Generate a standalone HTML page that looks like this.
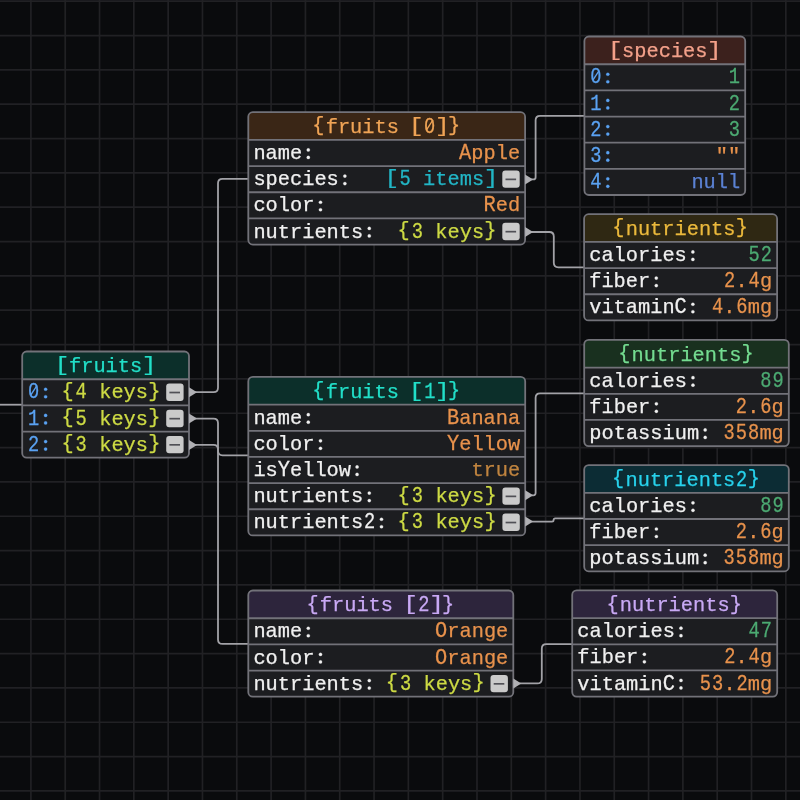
<!DOCTYPE html>
<html><head><meta charset="utf-8"><style>html,body{margin:0;padding:0;background:#0a0b0d;width:800px;height:800px;overflow:hidden}text{font-family:"Liberation Mono",monospace}</style></head>
<body><div style="will-change:transform"><svg width="800" height="800" viewBox="0 0 800 800" style="display:block"><rect width="800" height="800" fill="#0a0b0d"/><path d="M30.90 0V800M65.22 0V800M99.53 0V800M133.84 0V800M168.16 0V800M202.47 0V800M236.79 0V800M271.10 0V800M305.42 0V800M339.73 0V800M374.05 0V800M408.36 0V800M442.68 0V800M476.99 0V800M511.31 0V800M545.62 0V800M579.94 0V800M614.25 0V800M648.57 0V800M682.88 0V800M717.20 0V800M751.51 0V800M785.83 0V800M0 1.20H800M0 35.54H800M0 69.87H800M0 104.21H800M0 138.54H800M0 172.88H800M0 207.22H800M0 241.55H800M0 275.89H800M0 310.22H800M0 344.56H800M0 378.90H800M0 413.23H800M0 447.57H800M0 481.90H800M0 516.24H800M0 550.58H800M0 584.91H800M0 619.25H800M0 653.58H800M0 687.92H800M0 722.26H800M0 756.59H800M0 790.93H800" stroke="#212124" stroke-width="1.7" fill="none"/><path d="M-5 404.7H23" stroke="#a2a2a7" stroke-width="1.8" fill="none"/><path d="M195.00 392.20L213.50 392.20Q218.00 392.20 218.00 387.70L218.00 183.30Q218.00 178.80 222.50 178.80L248.30 178.80" stroke="#a2a2a7" stroke-width="1.8" fill="none"/><path d="M195.00 418.60L213.50 418.60Q218.00 418.60 218.00 423.10L218.00 450.80Q218.00 455.30 222.50 455.30L248.30 455.30" stroke="#a2a2a7" stroke-width="1.8" fill="none"/><path d="M195.00 444.90L213.50 444.90Q218.00 444.90 218.00 449.40L218.00 639.40Q218.00 643.90 222.50 643.90L248.30 643.90" stroke="#a2a2a7" stroke-width="1.8" fill="none"/><path d="M531.10 179.40L533.35 179.40Q535.60 179.40 535.60 177.15L535.60 120.30Q535.60 115.80 540.10 115.80L584.40 115.80" stroke="#a2a2a7" stroke-width="1.8" fill="none"/><path d="M531.10 232.00L549.30 232.00Q553.80 232.00 553.80 236.50L553.80 262.80Q553.80 267.30 558.30 267.30L584.10 267.30" stroke="#a2a2a7" stroke-width="1.8" fill="none"/><path d="M531.20 495.30L533.40 495.30Q535.60 495.30 535.60 493.10L535.60 397.80Q535.60 393.30 540.10 393.30L584.20 393.30" stroke="#a2a2a7" stroke-width="1.8" fill="none"/><path d="M531.20 521.60L552.00 521.60Q553.60 521.60 553.60 520.00L553.60 520.00Q553.60 518.40 555.20 518.40L584.20 518.40" stroke="#a2a2a7" stroke-width="1.8" fill="none"/><path d="M519.30 683.40L537.30 683.40Q541.80 683.40 541.80 678.90L541.80 648.70Q541.80 644.20 546.30 644.20L572.40 644.20" stroke="#a2a2a7" stroke-width="1.8" fill="none"/><rect x="22.20" y="351.50" width="166.80" height="106.20" rx="4.5" fill="#1c1d20"/><path d="M22.20 379.25V356.00Q22.20 351.50 26.70 351.50H184.50Q189.00 351.50 189.00 356.00V379.25Z" fill="#0c2f2a"/><path d="M22.20 379.25H189.00M22.20 405.40H189.00M22.20 431.55H189.00" stroke="#727279" stroke-width="1.8" fill="none"/><rect x="22.20" y="351.50" width="166.80" height="106.20" rx="4.5" fill="none" stroke="#727279" stroke-width="1.8"/><rect x="166.20" y="383.62" width="17.4" height="17.4" rx="3" fill="#cacaca"/><path d="M169.40 392.52H180.00" stroke="#505056" stroke-width="1.7"/><rect x="166.20" y="409.77" width="17.4" height="17.4" rx="3" fill="#cacaca"/><path d="M169.40 418.67H180.00" stroke="#505056" stroke-width="1.7"/><rect x="166.20" y="435.93" width="17.4" height="17.4" rx="3" fill="#cacaca"/><path d="M169.40 444.82H180.00" stroke="#505056" stroke-width="1.7"/><rect x="248.30" y="112.20" width="276.80" height="132.35" rx="4.5" fill="#1c1d20"/><path d="M248.30 139.95V116.70Q248.30 112.20 252.80 112.20H520.60Q525.10 112.20 525.10 116.70V139.95Z" fill="#3a2616"/><path d="M248.30 139.95H525.10M248.30 166.10H525.10M248.30 192.25H525.10M248.30 218.40H525.10" stroke="#727279" stroke-width="1.8" fill="none"/><rect x="248.30" y="112.20" width="276.80" height="132.35" rx="4.5" fill="none" stroke="#727279" stroke-width="1.8"/><rect x="502.30" y="170.47" width="17.4" height="17.4" rx="3" fill="#cacaca"/><path d="M505.50 179.37H516.10" stroke="#505056" stroke-width="1.7"/><rect x="502.30" y="222.77" width="17.4" height="17.4" rx="3" fill="#cacaca"/><path d="M505.50 231.67H516.10" stroke="#505056" stroke-width="1.7"/><rect x="584.40" y="36.50" width="160.80" height="158.50" rx="4.5" fill="#1c1d20"/><path d="M584.40 64.25V41.00Q584.40 36.50 588.90 36.50H740.70Q745.20 36.50 745.20 41.00V64.25Z" fill="#3c211d"/><path d="M584.40 64.25H745.20M584.40 90.40H745.20M584.40 116.55H745.20M584.40 142.70H745.20M584.40 168.85H745.20" stroke="#727279" stroke-width="1.8" fill="none"/><rect x="584.40" y="36.50" width="160.80" height="158.50" rx="4.5" fill="none" stroke="#727279" stroke-width="1.8"/><rect x="584.10" y="214.20" width="193.00" height="106.20" rx="4.5" fill="#1c1d20"/><path d="M584.10 241.95V218.70Q584.10 214.20 588.60 214.20H772.60Q777.10 214.20 777.10 218.70V241.95Z" fill="#2f2813"/><path d="M584.10 241.95H777.10M584.10 268.10H777.10M584.10 294.25H777.10" stroke="#727279" stroke-width="1.8" fill="none"/><rect x="584.10" y="214.20" width="193.00" height="106.20" rx="4.5" fill="none" stroke="#727279" stroke-width="1.8"/><rect x="584.20" y="339.90" width="204.60" height="106.20" rx="4.5" fill="#1c1d20"/><path d="M584.20 367.65V344.40Q584.20 339.90 588.70 339.90H784.30Q788.80 339.90 788.80 344.40V367.65Z" fill="#19301f"/><path d="M584.20 367.65H788.80M584.20 393.80H788.80M584.20 419.95H788.80" stroke="#727279" stroke-width="1.8" fill="none"/><rect x="584.20" y="339.90" width="204.60" height="106.20" rx="4.5" fill="none" stroke="#727279" stroke-width="1.8"/><rect x="248.30" y="376.90" width="276.90" height="158.50" rx="4.5" fill="#1c1d20"/><path d="M248.30 404.65V381.40Q248.30 376.90 252.80 376.90H520.70Q525.20 376.90 525.20 381.40V404.65Z" fill="#0c2f2a"/><path d="M248.30 404.65H525.20M248.30 430.80H525.20M248.30 456.95H525.20M248.30 483.10H525.20M248.30 509.25H525.20" stroke="#727279" stroke-width="1.8" fill="none"/><rect x="248.30" y="376.90" width="276.90" height="158.50" rx="4.5" fill="none" stroke="#727279" stroke-width="1.8"/><rect x="502.40" y="487.47" width="17.4" height="17.4" rx="3" fill="#cacaca"/><path d="M505.60 496.37H516.20" stroke="#505056" stroke-width="1.7"/><rect x="502.40" y="513.62" width="17.4" height="17.4" rx="3" fill="#cacaca"/><path d="M505.60 522.53H516.20" stroke="#505056" stroke-width="1.7"/><rect x="584.20" y="465.10" width="204.60" height="106.20" rx="4.5" fill="#1c1d20"/><path d="M584.20 492.85V469.60Q584.20 465.10 588.70 465.10H784.30Q788.80 465.10 788.80 469.60V492.85Z" fill="#0c2c34"/><path d="M584.20 492.85H788.80M584.20 519.00H788.80M584.20 545.15H788.80" stroke="#727279" stroke-width="1.8" fill="none"/><rect x="584.20" y="465.10" width="204.60" height="106.20" rx="4.5" fill="none" stroke="#727279" stroke-width="1.8"/><rect x="248.30" y="590.50" width="265.00" height="106.20" rx="4.5" fill="#1c1d20"/><path d="M248.30 618.25V595.00Q248.30 590.50 252.80 590.50H508.80Q513.30 590.50 513.30 595.00V618.25Z" fill="#2d253c"/><path d="M248.30 618.25H513.30M248.30 644.40H513.30M248.30 670.55H513.30" stroke="#727279" stroke-width="1.8" fill="none"/><rect x="248.30" y="590.50" width="265.00" height="106.20" rx="4.5" fill="none" stroke="#727279" stroke-width="1.8"/><rect x="490.50" y="674.92" width="17.4" height="17.4" rx="3" fill="#cacaca"/><path d="M493.70 683.83H504.30" stroke="#505056" stroke-width="1.7"/><rect x="572.20" y="590.40" width="205.00" height="106.20" rx="4.5" fill="#1c1d20"/><path d="M572.20 618.15V594.90Q572.20 590.40 576.70 590.40H772.70Q777.20 590.40 777.20 594.90V618.15Z" fill="#2d253c"/><path d="M572.20 618.15H777.20M572.20 644.30H777.20M572.20 670.45H777.20" stroke="#727279" stroke-width="1.8" fill="none"/><rect x="572.20" y="590.40" width="205.00" height="106.20" rx="4.5" fill="none" stroke="#727279" stroke-width="1.8"/><path d="M189.00 387.20L197.00 392.20L189.00 397.20Z" fill="#b0b0b4"/><path d="M189.00 413.60L197.00 418.60L189.00 423.60Z" fill="#b0b0b4"/><path d="M189.00 439.90L197.00 444.90L189.00 449.90Z" fill="#b0b0b4"/><path d="M525.10 174.40L533.10 179.40L525.10 184.40Z" fill="#b0b0b4"/><path d="M525.10 227.00L533.10 232.00L525.10 237.00Z" fill="#b0b0b4"/><path d="M525.20 490.30L533.20 495.30L525.20 500.30Z" fill="#b0b0b4"/><path d="M525.20 516.60L533.20 521.60L525.20 526.60Z" fill="#b0b0b4"/><path d="M513.30 678.40L521.30 683.40L513.30 688.40Z" fill="#b0b0b4"/><g font-family="Liberation Mono" font-size="20.33" text-anchor="middle"><g fill="#22dfc8" stroke="#22dfc8" stroke-width="0.25"><text transform="matrix(1.2 0 0 1.0 62.11 371.10)">[</text><text x="75.10" y="372.10">f</text><text x="87.30" y="372.10">r</text><text x="99.50" y="372.10">u</text><text x="111.70" y="372.10">i</text><text x="123.90" y="372.10">t</text><text x="136.09" y="372.10">s</text><text transform="matrix(1.2 0 0 1.0 149.09 371.10)">]</text></g><g fill="#5aa2f2" stroke="#5aa2f2" stroke-width="0.25"><text transform="matrix(0.92 0 0 1.1 33.70 398.35)">0</text><circle cx="45.60" cy="389.25" r="1.6"/><circle cx="45.60" cy="396.75" r="1.6"/></g><rect x="32.00" y="387.95" width="3.6" height="4.6" fill="#1c1d20"/><path d="M30.70 395.15L36.90 385.55" stroke="#5aa2f2" stroke-width="1.35" fill="none"/><g fill="#cdda44" stroke="#cdda44" stroke-width="0.25"><text x="67.52" y="396.85">{</text><text transform="matrix(0.92 0 0 1.1 81.21 398.35)">4</text><text x="105.31" y="398.35">k</text><text x="117.51" y="398.35">e</text><text x="129.70" y="398.35">y</text><text x="141.90" y="398.35">s</text><text x="154.30" y="396.85">}</text></g><g fill="#5aa2f2" stroke="#5aa2f2" stroke-width="0.25"><text transform="matrix(0.92 0 0 1.1 33.70 424.50)">1</text><circle cx="45.60" cy="415.40" r="1.6"/><circle cx="45.60" cy="422.90" r="1.6"/></g><g fill="#cdda44" stroke="#cdda44" stroke-width="0.25"><text x="67.52" y="423.00">{</text><text transform="matrix(0.92 0 0 1.1 81.21 424.50)">5</text><text x="105.31" y="424.50">k</text><text x="117.51" y="424.50">e</text><text x="129.70" y="424.50">y</text><text x="141.90" y="424.50">s</text><text x="154.30" y="423.00">}</text></g><g fill="#5aa2f2" stroke="#5aa2f2" stroke-width="0.25"><text transform="matrix(0.92 0 0 1.1 33.70 450.65)">2</text><circle cx="45.60" cy="441.55" r="1.6"/><circle cx="45.60" cy="449.05" r="1.6"/></g><g fill="#cdda44" stroke="#cdda44" stroke-width="0.25"><text x="67.52" y="449.15">{</text><text transform="matrix(0.92 0 0 1.1 81.21 450.65)">3</text><text x="105.31" y="450.65">k</text><text x="117.51" y="450.65">e</text><text x="129.70" y="450.65">y</text><text x="141.90" y="450.65">s</text><text x="154.30" y="449.15">}</text></g><g fill="#f0a456" stroke="#f0a456" stroke-width="0.25"><text x="318.41" y="131.30">{</text><text x="331.81" y="132.80">f</text><text x="344.01" y="132.80">r</text><text x="356.21" y="132.80">u</text><text x="368.40" y="132.80">i</text><text x="380.60" y="132.80">t</text><text x="392.80" y="132.80">s</text><text transform="matrix(1.2 0 0 1.0 416.40 131.80)">[</text><text transform="matrix(0.92 0 0 1.1 429.69 132.80)">0</text><text transform="matrix(1.2 0 0 1.0 442.39 131.80)">]</text><text x="453.99" y="131.30">}</text></g><rect x="427.99" y="122.40" width="3.6" height="4.6" fill="#3a2616"/><path d="M426.69 129.60L432.89 120.00" stroke="#f0a456" stroke-width="1.35" fill="none"/><g fill="#f0f0f0" stroke="#f0f0f0" stroke-width="0.25"><text x="259.50" y="159.05">n</text><text x="271.70" y="159.05">a</text><text x="283.89" y="159.05">m</text><text x="296.09" y="159.05">e</text><circle cx="308.29" cy="149.95" r="1.6"/><circle cx="308.29" cy="157.45" r="1.6"/></g><g fill="#e8924c" stroke="#e8924c" stroke-width="0.25"><text transform="matrix(1.0 0 0 1.08 465.21 159.05)">A</text><text x="477.41" y="159.05">p</text><text x="489.61" y="159.05">p</text><text x="501.80" y="159.05">l</text><text x="514.00" y="159.05">e</text></g><g fill="#f0f0f0" stroke="#f0f0f0" stroke-width="0.25"><text x="259.50" y="185.20">s</text><text x="271.70" y="185.20">p</text><text x="283.89" y="185.20">e</text><text x="296.09" y="185.20">c</text><text x="308.29" y="185.20">i</text><text x="320.49" y="185.20">e</text><text x="332.69" y="185.20">s</text><circle cx="344.88" cy="176.10" r="1.6"/><circle cx="344.88" cy="183.60" r="1.6"/></g><g fill="#22b6c6" stroke="#22b6c6" stroke-width="0.25"><text transform="matrix(1.2 0 0 1.0 391.82 184.20)">[</text><text transform="matrix(0.92 0 0 1.1 405.12 185.20)">5</text><text x="429.21" y="185.20">i</text><text x="441.41" y="185.20">t</text><text x="453.61" y="185.20">e</text><text x="465.81" y="185.20">m</text><text x="478.00" y="185.20">s</text><text transform="matrix(1.2 0 0 1.0 491.00 184.20)">]</text></g><g fill="#f0f0f0" stroke="#f0f0f0" stroke-width="0.25"><text x="259.50" y="211.35">c</text><text x="271.70" y="211.35">o</text><text x="283.89" y="211.35">l</text><text x="296.09" y="211.35">o</text><text x="308.29" y="211.35">r</text><circle cx="320.49" cy="202.25" r="1.6"/><circle cx="320.49" cy="209.75" r="1.6"/></g><g fill="#e8924c" stroke="#e8924c" stroke-width="0.25"><text transform="matrix(1.0 0 0 1.08 489.61 211.35)">R</text><text x="501.80" y="211.35">e</text><text x="514.00" y="211.35">d</text></g><g fill="#f0f0f0" stroke="#f0f0f0" stroke-width="0.25"><text x="259.50" y="237.50">n</text><text x="271.70" y="237.50">u</text><text x="283.89" y="237.50">t</text><text x="296.09" y="237.50">r</text><text x="308.29" y="237.50">i</text><text x="320.49" y="237.50">e</text><text x="332.69" y="237.50">n</text><text x="344.88" y="237.50">t</text><text x="357.08" y="237.50">s</text><circle cx="369.28" cy="228.40" r="1.6"/><circle cx="369.28" cy="235.90" r="1.6"/></g><g fill="#cdda44" stroke="#cdda44" stroke-width="0.25"><text x="403.62" y="236.00">{</text><text transform="matrix(0.92 0 0 1.1 417.31 237.50)">3</text><text x="441.41" y="237.50">k</text><text x="453.61" y="237.50">e</text><text x="465.81" y="237.50">y</text><text x="478.00" y="237.50">s</text><text x="490.40" y="236.00">}</text></g><g fill="#f3a08a" stroke="#f3a08a" stroke-width="0.25"><text transform="matrix(1.2 0 0 1.0 615.21 56.10)">[</text><text x="628.21" y="57.10">s</text><text x="640.40" y="57.10">p</text><text x="652.60" y="57.10">e</text><text x="664.80" y="57.10">c</text><text x="677.00" y="57.10">i</text><text x="689.20" y="57.10">e</text><text x="701.39" y="57.10">s</text><text transform="matrix(1.2 0 0 1.0 714.39 56.10)">]</text></g><g fill="#5aa2f2" stroke="#5aa2f2" stroke-width="0.25"><text transform="matrix(0.92 0 0 1.1 595.90 83.35)">0</text><circle cx="607.80" cy="74.25" r="1.6"/><circle cx="607.80" cy="81.75" r="1.6"/></g><rect x="594.20" y="72.95" width="3.6" height="4.6" fill="#1c1d20"/><path d="M592.90 80.15L599.10 70.55" stroke="#5aa2f2" stroke-width="1.35" fill="none"/><g fill="#4caa72" stroke="#4caa72" stroke-width="0.25"><text transform="matrix(0.92 0 0 1.1 734.40 83.35)">1</text></g><g fill="#5aa2f2" stroke="#5aa2f2" stroke-width="0.25"><text transform="matrix(0.92 0 0 1.1 595.90 109.50)">1</text><circle cx="607.80" cy="100.40" r="1.6"/><circle cx="607.80" cy="107.90" r="1.6"/></g><g fill="#4caa72" stroke="#4caa72" stroke-width="0.25"><text transform="matrix(0.92 0 0 1.1 734.40 109.50)">2</text></g><g fill="#5aa2f2" stroke="#5aa2f2" stroke-width="0.25"><text transform="matrix(0.92 0 0 1.1 595.90 135.65)">2</text><circle cx="607.80" cy="126.55" r="1.6"/><circle cx="607.80" cy="134.05" r="1.6"/></g><g fill="#4caa72" stroke="#4caa72" stroke-width="0.25"><text transform="matrix(0.92 0 0 1.1 734.40 135.65)">3</text></g><g fill="#5aa2f2" stroke="#5aa2f2" stroke-width="0.25"><text transform="matrix(0.92 0 0 1.1 595.90 161.80)">3</text><circle cx="607.80" cy="152.70" r="1.6"/><circle cx="607.80" cy="160.20" r="1.6"/></g><g fill="#e8924c" stroke="#e8924c" stroke-width="0.25"><text x="721.90" y="161.80">&quot;</text><text x="734.10" y="161.80">&quot;</text></g><g fill="#5aa2f2" stroke="#5aa2f2" stroke-width="0.25"><text transform="matrix(0.92 0 0 1.1 595.90 187.95)">4</text><circle cx="607.80" cy="178.85" r="1.6"/><circle cx="607.80" cy="186.35" r="1.6"/></g><g fill="#5b82d4" stroke="#5b82d4" stroke-width="0.25"><text x="697.51" y="187.95">n</text><text x="709.71" y="187.95">u</text><text x="721.90" y="187.95">l</text><text x="734.10" y="187.95">l</text></g><g fill="#ebb93c" stroke="#ebb93c" stroke-width="0.25"><text x="618.41" y="233.30">{</text><text x="631.81" y="234.80">n</text><text x="644.01" y="234.80">u</text><text x="656.20" y="234.80">t</text><text x="668.40" y="234.80">r</text><text x="680.60" y="234.80">i</text><text x="692.80" y="234.80">e</text><text x="705.00" y="234.80">n</text><text x="717.19" y="234.80">t</text><text x="729.39" y="234.80">s</text><text x="741.79" y="233.30">}</text></g><g fill="#f0f0f0" stroke="#f0f0f0" stroke-width="0.25"><text x="595.30" y="261.05">c</text><text x="607.50" y="261.05">a</text><text x="619.70" y="261.05">l</text><text x="631.89" y="261.05">o</text><text x="644.09" y="261.05">r</text><text x="656.29" y="261.05">i</text><text x="668.49" y="261.05">e</text><text x="680.69" y="261.05">s</text><circle cx="692.88" cy="251.95" r="1.6"/><circle cx="692.88" cy="259.45" r="1.6"/></g><g fill="#4caa72" stroke="#4caa72" stroke-width="0.25"><text transform="matrix(0.92 0 0 1.1 754.10 261.05)">5</text><text transform="matrix(0.92 0 0 1.1 766.30 261.05)">2</text></g><g fill="#f0f0f0" stroke="#f0f0f0" stroke-width="0.25"><text x="595.30" y="287.20">f</text><text x="607.50" y="287.20">i</text><text x="619.70" y="287.20">b</text><text x="631.89" y="287.20">e</text><text x="644.09" y="287.20">r</text><circle cx="656.29" cy="278.10" r="1.6"/><circle cx="656.29" cy="285.60" r="1.6"/></g><g fill="#e8924c" stroke="#e8924c" stroke-width="0.25"><text transform="matrix(0.92 0 0 1.1 729.71 287.20)">2</text><text x="741.61" y="287.20">.</text><text transform="matrix(0.92 0 0 1.1 754.10 287.20)">4</text><text x="766.00" y="287.20">g</text></g><g fill="#f0f0f0" stroke="#f0f0f0" stroke-width="0.25"><text x="595.30" y="313.35">v</text><text x="607.50" y="313.35">i</text><text x="619.70" y="313.35">t</text><text x="631.89" y="313.35">a</text><text x="644.09" y="313.35">m</text><text x="656.29" y="313.35">i</text><text x="668.49" y="313.35">n</text><text transform="matrix(1.0 0 0 1.08 680.69 313.35)">C</text><circle cx="692.88" cy="304.25" r="1.6"/><circle cx="692.88" cy="311.75" r="1.6"/></g><g fill="#e8924c" stroke="#e8924c" stroke-width="0.25"><text transform="matrix(0.92 0 0 1.1 717.51 313.35)">4</text><text x="729.41" y="313.35">.</text><text transform="matrix(0.92 0 0 1.1 741.90 313.35)">6</text><text x="753.80" y="313.35">m</text><text x="766.00" y="313.35">g</text></g><g fill="#74dc90" stroke="#74dc90" stroke-width="0.25"><text x="624.31" y="359.00">{</text><text x="637.71" y="360.50">n</text><text x="649.91" y="360.50">u</text><text x="662.10" y="360.50">t</text><text x="674.30" y="360.50">r</text><text x="686.50" y="360.50">i</text><text x="698.70" y="360.50">e</text><text x="710.90" y="360.50">n</text><text x="723.09" y="360.50">t</text><text x="735.29" y="360.50">s</text><text x="747.69" y="359.00">}</text></g><g fill="#f0f0f0" stroke="#f0f0f0" stroke-width="0.25"><text x="595.40" y="386.75">c</text><text x="607.60" y="386.75">a</text><text x="619.80" y="386.75">l</text><text x="631.99" y="386.75">o</text><text x="644.19" y="386.75">r</text><text x="656.39" y="386.75">i</text><text x="668.59" y="386.75">e</text><text x="680.79" y="386.75">s</text><circle cx="692.98" cy="377.65" r="1.6"/><circle cx="692.98" cy="385.15" r="1.6"/></g><g fill="#4caa72" stroke="#4caa72" stroke-width="0.25"><text transform="matrix(0.92 0 0 1.1 765.80 386.75)">8</text><text transform="matrix(0.92 0 0 1.1 778.00 386.75)">9</text></g><g fill="#f0f0f0" stroke="#f0f0f0" stroke-width="0.25"><text x="595.40" y="412.90">f</text><text x="607.60" y="412.90">i</text><text x="619.80" y="412.90">b</text><text x="631.99" y="412.90">e</text><text x="644.19" y="412.90">r</text><circle cx="656.39" cy="403.80" r="1.6"/><circle cx="656.39" cy="411.30" r="1.6"/></g><g fill="#e8924c" stroke="#e8924c" stroke-width="0.25"><text transform="matrix(0.92 0 0 1.1 741.41 412.90)">2</text><text x="753.30" y="412.90">.</text><text transform="matrix(0.92 0 0 1.1 765.80 412.90)">6</text><text x="777.70" y="412.90">g</text></g><g fill="#f0f0f0" stroke="#f0f0f0" stroke-width="0.25"><text x="595.40" y="439.05">p</text><text x="607.60" y="439.05">o</text><text x="619.80" y="439.05">t</text><text x="631.99" y="439.05">a</text><text x="644.19" y="439.05">s</text><text x="656.39" y="439.05">s</text><text x="668.59" y="439.05">i</text><text x="680.79" y="439.05">u</text><text x="692.98" y="439.05">m</text><circle cx="705.18" cy="429.95" r="1.6"/><circle cx="705.18" cy="437.45" r="1.6"/></g><g fill="#e8924c" stroke="#e8924c" stroke-width="0.25"><text transform="matrix(0.92 0 0 1.1 729.21 439.05)">3</text><text transform="matrix(0.92 0 0 1.1 741.41 439.05)">5</text><text transform="matrix(0.92 0 0 1.1 753.60 439.05)">8</text><text x="765.50" y="439.05">m</text><text x="777.70" y="439.05">g</text></g><g fill="#22dfc8" stroke="#22dfc8" stroke-width="0.25"><text x="318.46" y="396.00">{</text><text x="331.86" y="397.50">f</text><text x="344.06" y="397.50">r</text><text x="356.25" y="397.50">u</text><text x="368.45" y="397.50">i</text><text x="380.65" y="397.50">t</text><text x="392.85" y="397.50">s</text><text transform="matrix(1.2 0 0 1.0 416.44 396.50)">[</text><text transform="matrix(0.92 0 0 1.1 429.74 397.50)">1</text><text transform="matrix(1.2 0 0 1.0 442.44 396.50)">]</text><text x="454.04" y="396.00">}</text></g><g fill="#f0f0f0" stroke="#f0f0f0" stroke-width="0.25"><text x="259.50" y="423.75">n</text><text x="271.70" y="423.75">a</text><text x="283.89" y="423.75">m</text><text x="296.09" y="423.75">e</text><circle cx="308.29" cy="414.65" r="1.6"/><circle cx="308.29" cy="422.15" r="1.6"/></g><g fill="#e8924c" stroke="#e8924c" stroke-width="0.25"><text transform="matrix(1.0 0 0 1.08 453.11 423.75)">B</text><text x="465.31" y="423.75">a</text><text x="477.51" y="423.75">n</text><text x="489.71" y="423.75">a</text><text x="501.90" y="423.75">n</text><text x="514.10" y="423.75">a</text></g><g fill="#f0f0f0" stroke="#f0f0f0" stroke-width="0.25"><text x="259.50" y="449.90">c</text><text x="271.70" y="449.90">o</text><text x="283.89" y="449.90">l</text><text x="296.09" y="449.90">o</text><text x="308.29" y="449.90">r</text><circle cx="320.49" cy="440.80" r="1.6"/><circle cx="320.49" cy="448.30" r="1.6"/></g><g fill="#e8924c" stroke="#e8924c" stroke-width="0.25"><text transform="matrix(1.0 0 0 1.08 453.11 449.90)">Y</text><text x="465.31" y="449.90">e</text><text x="477.51" y="449.90">l</text><text x="489.71" y="449.90">l</text><text x="501.90" y="449.90">o</text><text x="514.10" y="449.90">w</text></g><g fill="#f0f0f0" stroke="#f0f0f0" stroke-width="0.25"><text x="259.50" y="476.05">i</text><text x="271.70" y="476.05">s</text><text transform="matrix(1.0 0 0 1.08 283.89 476.05)">Y</text><text x="296.09" y="476.05">e</text><text x="308.29" y="476.05">l</text><text x="320.49" y="476.05">l</text><text x="332.69" y="476.05">o</text><text x="344.88" y="476.05">w</text><circle cx="357.08" cy="466.95" r="1.6"/><circle cx="357.08" cy="474.45" r="1.6"/></g><g fill="#c0843f" stroke="#c0843f" stroke-width="0.25"><text x="477.51" y="476.05">t</text><text x="489.71" y="476.05">r</text><text x="501.90" y="476.05">u</text><text x="514.10" y="476.05">e</text></g><g fill="#f0f0f0" stroke="#f0f0f0" stroke-width="0.25"><text x="259.50" y="502.20">n</text><text x="271.70" y="502.20">u</text><text x="283.89" y="502.20">t</text><text x="296.09" y="502.20">r</text><text x="308.29" y="502.20">i</text><text x="320.49" y="502.20">e</text><text x="332.69" y="502.20">n</text><text x="344.88" y="502.20">t</text><text x="357.08" y="502.20">s</text><circle cx="369.28" cy="493.10" r="1.6"/><circle cx="369.28" cy="500.60" r="1.6"/></g><g fill="#cdda44" stroke="#cdda44" stroke-width="0.25"><text x="403.72" y="500.70">{</text><text transform="matrix(0.92 0 0 1.1 417.41 502.20)">3</text><text x="441.51" y="502.20">k</text><text x="453.71" y="502.20">e</text><text x="465.91" y="502.20">y</text><text x="478.10" y="502.20">s</text><text x="490.50" y="500.70">}</text></g><g fill="#f0f0f0" stroke="#f0f0f0" stroke-width="0.25"><text x="259.50" y="528.35">n</text><text x="271.70" y="528.35">u</text><text x="283.89" y="528.35">t</text><text x="296.09" y="528.35">r</text><text x="308.29" y="528.35">i</text><text x="320.49" y="528.35">e</text><text x="332.69" y="528.35">n</text><text x="344.88" y="528.35">t</text><text x="357.08" y="528.35">s</text><text transform="matrix(0.92 0 0 1.1 369.58 528.35)">2</text><circle cx="381.48" cy="519.25" r="1.6"/><circle cx="381.48" cy="526.75" r="1.6"/></g><g fill="#cdda44" stroke="#cdda44" stroke-width="0.25"><text x="403.72" y="526.85">{</text><text transform="matrix(0.92 0 0 1.1 417.41 528.35)">3</text><text x="441.51" y="528.35">k</text><text x="453.71" y="528.35">e</text><text x="465.91" y="528.35">y</text><text x="478.10" y="528.35">s</text><text x="490.50" y="526.85">}</text></g><g fill="#27d2ec" stroke="#27d2ec" stroke-width="0.25"><text x="618.21" y="484.20">{</text><text x="631.61" y="485.70">n</text><text x="643.81" y="485.70">u</text><text x="656.00" y="485.70">t</text><text x="668.20" y="485.70">r</text><text x="680.40" y="485.70">i</text><text x="692.60" y="485.70">e</text><text x="704.80" y="485.70">n</text><text x="717.00" y="485.70">t</text><text x="729.19" y="485.70">s</text><text transform="matrix(0.92 0 0 1.1 741.69 485.70)">2</text><text x="753.79" y="484.20">}</text></g><g fill="#f0f0f0" stroke="#f0f0f0" stroke-width="0.25"><text x="595.40" y="511.95">c</text><text x="607.60" y="511.95">a</text><text x="619.80" y="511.95">l</text><text x="631.99" y="511.95">o</text><text x="644.19" y="511.95">r</text><text x="656.39" y="511.95">i</text><text x="668.59" y="511.95">e</text><text x="680.79" y="511.95">s</text><circle cx="692.98" cy="502.85" r="1.6"/><circle cx="692.98" cy="510.35" r="1.6"/></g><g fill="#4caa72" stroke="#4caa72" stroke-width="0.25"><text transform="matrix(0.92 0 0 1.1 765.80 511.95)">8</text><text transform="matrix(0.92 0 0 1.1 778.00 511.95)">9</text></g><g fill="#f0f0f0" stroke="#f0f0f0" stroke-width="0.25"><text x="595.40" y="538.10">f</text><text x="607.60" y="538.10">i</text><text x="619.80" y="538.10">b</text><text x="631.99" y="538.10">e</text><text x="644.19" y="538.10">r</text><circle cx="656.39" cy="529.00" r="1.6"/><circle cx="656.39" cy="536.50" r="1.6"/></g><g fill="#e8924c" stroke="#e8924c" stroke-width="0.25"><text transform="matrix(0.92 0 0 1.1 741.41 538.10)">2</text><text x="753.30" y="538.10">.</text><text transform="matrix(0.92 0 0 1.1 765.80 538.10)">6</text><text x="777.70" y="538.10">g</text></g><g fill="#f0f0f0" stroke="#f0f0f0" stroke-width="0.25"><text x="595.40" y="564.25">p</text><text x="607.60" y="564.25">o</text><text x="619.80" y="564.25">t</text><text x="631.99" y="564.25">a</text><text x="644.19" y="564.25">s</text><text x="656.39" y="564.25">s</text><text x="668.59" y="564.25">i</text><text x="680.79" y="564.25">u</text><text x="692.98" y="564.25">m</text><circle cx="705.18" cy="555.15" r="1.6"/><circle cx="705.18" cy="562.65" r="1.6"/></g><g fill="#e8924c" stroke="#e8924c" stroke-width="0.25"><text transform="matrix(0.92 0 0 1.1 729.21 564.25)">3</text><text transform="matrix(0.92 0 0 1.1 741.41 564.25)">5</text><text transform="matrix(0.92 0 0 1.1 753.60 564.25)">8</text><text x="765.50" y="564.25">m</text><text x="777.70" y="564.25">g</text></g><g fill="#c9a9f5" stroke="#c9a9f5" stroke-width="0.25"><text x="312.51" y="609.60">{</text><text x="325.91" y="611.10">f</text><text x="338.11" y="611.10">r</text><text x="350.30" y="611.10">u</text><text x="362.50" y="611.10">i</text><text x="374.70" y="611.10">t</text><text x="386.90" y="611.10">s</text><text transform="matrix(1.2 0 0 1.0 410.49 610.10)">[</text><text transform="matrix(0.92 0 0 1.1 423.79 611.10)">2</text><text transform="matrix(1.2 0 0 1.0 436.49 610.10)">]</text><text x="448.09" y="609.60">}</text></g><g fill="#f0f0f0" stroke="#f0f0f0" stroke-width="0.25"><text x="259.50" y="637.35">n</text><text x="271.70" y="637.35">a</text><text x="283.89" y="637.35">m</text><text x="296.09" y="637.35">e</text><circle cx="308.29" cy="628.25" r="1.6"/><circle cx="308.29" cy="635.75" r="1.6"/></g><g fill="#e8924c" stroke="#e8924c" stroke-width="0.25"><text transform="matrix(1.0 0 0 1.08 441.21 637.35)">O</text><text x="453.41" y="637.35">r</text><text x="465.61" y="637.35">a</text><text x="477.80" y="637.35">n</text><text x="490.00" y="637.35">g</text><text x="502.20" y="637.35">e</text></g><g fill="#f0f0f0" stroke="#f0f0f0" stroke-width="0.25"><text x="259.50" y="663.50">c</text><text x="271.70" y="663.50">o</text><text x="283.89" y="663.50">l</text><text x="296.09" y="663.50">o</text><text x="308.29" y="663.50">r</text><circle cx="320.49" cy="654.40" r="1.6"/><circle cx="320.49" cy="661.90" r="1.6"/></g><g fill="#e8924c" stroke="#e8924c" stroke-width="0.25"><text transform="matrix(1.0 0 0 1.08 441.21 663.50)">O</text><text x="453.41" y="663.50">r</text><text x="465.61" y="663.50">a</text><text x="477.80" y="663.50">n</text><text x="490.00" y="663.50">g</text><text x="502.20" y="663.50">e</text></g><g fill="#f0f0f0" stroke="#f0f0f0" stroke-width="0.25"><text x="259.50" y="689.65">n</text><text x="271.70" y="689.65">u</text><text x="283.89" y="689.65">t</text><text x="296.09" y="689.65">r</text><text x="308.29" y="689.65">i</text><text x="320.49" y="689.65">e</text><text x="332.69" y="689.65">n</text><text x="344.88" y="689.65">t</text><text x="357.08" y="689.65">s</text><circle cx="369.28" cy="680.55" r="1.6"/><circle cx="369.28" cy="688.05" r="1.6"/></g><g fill="#cdda44" stroke="#cdda44" stroke-width="0.25"><text x="391.81" y="688.15">{</text><text transform="matrix(0.92 0 0 1.1 405.51 689.65)">3</text><text x="429.61" y="689.65">k</text><text x="441.81" y="689.65">e</text><text x="454.00" y="689.65">y</text><text x="466.20" y="689.65">s</text><text x="478.60" y="688.15">}</text></g><g fill="#c9a9f5" stroke="#c9a9f5" stroke-width="0.25"><text x="612.51" y="609.50">{</text><text x="625.91" y="611.00">n</text><text x="638.11" y="611.00">u</text><text x="650.30" y="611.00">t</text><text x="662.50" y="611.00">r</text><text x="674.70" y="611.00">i</text><text x="686.90" y="611.00">e</text><text x="699.10" y="611.00">n</text><text x="711.29" y="611.00">t</text><text x="723.49" y="611.00">s</text><text x="735.89" y="609.50">}</text></g><g fill="#f0f0f0" stroke="#f0f0f0" stroke-width="0.25"><text x="583.40" y="637.25">c</text><text x="595.60" y="637.25">a</text><text x="607.80" y="637.25">l</text><text x="619.99" y="637.25">o</text><text x="632.19" y="637.25">r</text><text x="644.39" y="637.25">i</text><text x="656.59" y="637.25">e</text><text x="668.79" y="637.25">s</text><circle cx="680.98" cy="628.15" r="1.6"/><circle cx="680.98" cy="635.65" r="1.6"/></g><g fill="#4caa72" stroke="#4caa72" stroke-width="0.25"><text transform="matrix(0.92 0 0 1.1 754.20 637.25)">4</text><text transform="matrix(0.92 0 0 1.1 766.40 637.25)">7</text></g><g fill="#f0f0f0" stroke="#f0f0f0" stroke-width="0.25"><text x="583.40" y="663.40">f</text><text x="595.60" y="663.40">i</text><text x="607.80" y="663.40">b</text><text x="619.99" y="663.40">e</text><text x="632.19" y="663.40">r</text><circle cx="644.39" cy="654.30" r="1.6"/><circle cx="644.39" cy="661.80" r="1.6"/></g><g fill="#e8924c" stroke="#e8924c" stroke-width="0.25"><text transform="matrix(0.92 0 0 1.1 729.81 663.40)">2</text><text x="741.71" y="663.40">.</text><text transform="matrix(0.92 0 0 1.1 754.20 663.40)">4</text><text x="766.10" y="663.40">g</text></g><g fill="#f0f0f0" stroke="#f0f0f0" stroke-width="0.25"><text x="583.40" y="689.55">v</text><text x="595.60" y="689.55">i</text><text x="607.80" y="689.55">t</text><text x="619.99" y="689.55">a</text><text x="632.19" y="689.55">m</text><text x="644.39" y="689.55">i</text><text x="656.59" y="689.55">n</text><text transform="matrix(1.0 0 0 1.08 668.79 689.55)">C</text><circle cx="680.98" cy="680.45" r="1.6"/><circle cx="680.98" cy="687.95" r="1.6"/></g><g fill="#e8924c" stroke="#e8924c" stroke-width="0.25"><text transform="matrix(0.92 0 0 1.1 705.41 689.55)">5</text><text transform="matrix(0.92 0 0 1.1 717.61 689.55)">3</text><text x="729.51" y="689.55">.</text><text transform="matrix(0.92 0 0 1.1 742.00 689.55)">2</text><text x="753.90" y="689.55">m</text><text x="766.10" y="689.55">g</text></g></g></svg></div></body></html>
